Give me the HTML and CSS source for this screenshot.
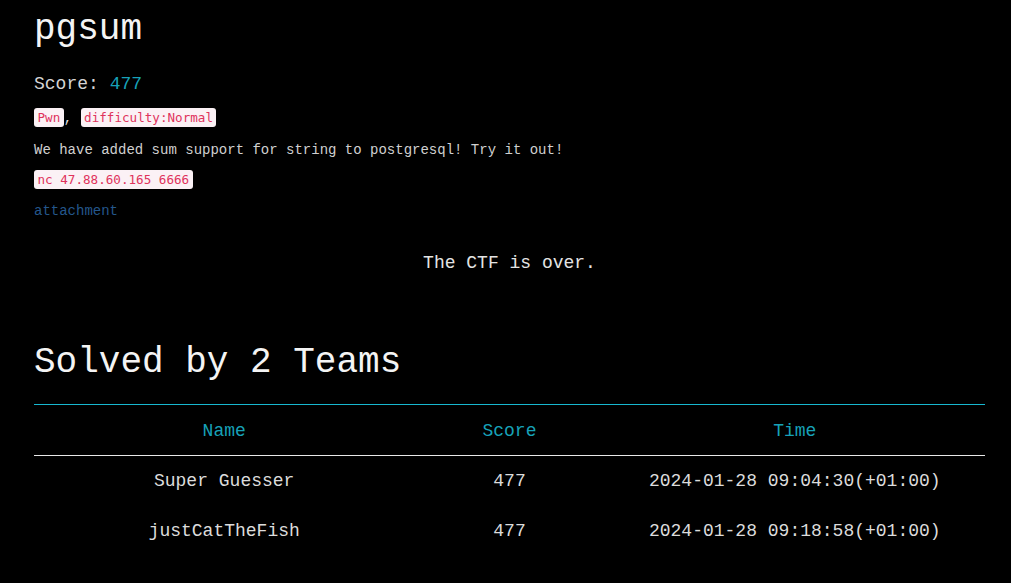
FILE: index.html
```html
<!DOCTYPE html>
<html>
<head>
<meta charset="utf-8">
<link rel="stylesheet" href="styles.css">
</head>
<body>
<div class="page">
  <h1 class="title">pgsum</h1>
  <p class="score">Score: <span class="score-val">477</span></p>
  <p class="tags"><code class="badge">Pwn</code>, <code class="badge">difficulty:Normal</code></p>
  <p class="desc">We have added sum support for string to postgresql! Try it out!</p>
  <p class="conn"><code class="badge">nc 47.88.60.165 6666</code></p>
  <p class="attach"><a href="#" class="link">attachment</a></p>
  <p class="over">The CTF is over.</p>
  <h2 class="solved">Solved by 2 Teams</h2>
  <table class="solves">
    <thead>
      <tr><th class="c-name">Name</th><th class="c-score">Score</th><th class="c-time">Time</th></tr>
    </thead>
    <tbody>
      <tr><td>Super Guesser</td><td>477</td><td>2024-01-28 09:04:30(+01:00)</td></tr>
      <tr><td>justCatTheFish</td><td>477</td><td>2024-01-28 09:18:58(+01:00)</td></tr>
    </tbody>
  </table>
</div>
</body>
</html>
```

FILE: styles.css
```css
html, body {
  margin: 0;
  padding: 0;
  background: #000;
}
body {
  font-family: "Courier New", "Liberation Mono", monospace;
  color: #dcdcdc;
}
.page {
  padding: 8px 26px 0 34px;
}
.title {
  margin: 0;
  font-size: 36px;
  line-height: 43px;
  font-weight: normal;
  color: #f4f4f4;
}
.score {
  margin: 20px 0 0;
  font-size: 18px;
  line-height: 27px;
  color: #d4d4d4;
}
.score-val {
  color: #17a2b8;
}
.tags, .conn {
  margin: 11px 0 0;
  font-size: 14px;
  line-height: 18px;
  color: #ddd;
}
.conn {
  margin-top: 10px;
}
.badge {
  font-family: "DejaVu Sans Mono", monospace;
  font-size: 12.6px;
  color: #e0335c;
  background: #fbf1f5;
  border-radius: 3px;
  padding: 2px 3.5px;
}
.desc {
  margin: 13px 0 0;
  font-size: 14px;
  line-height: 21px;
  color: #d0d0d0;
}
.attach {
  margin: 12px 0 0;
  font-size: 14px;
  line-height: 21px;
}
.link {
  color: #24578c;
  text-decoration: none;
}
.over {
  margin: 28px 0 0;
  text-align: center;
  font-size: 18px;
  line-height: 27px;
  color: #e4e4e4;
}
.solved {
  margin: 64px 0 0;
  font-size: 36px;
  line-height: 43px;
  font-weight: normal;
  color: #f4f4f4;
}
.solves {
  margin-top: 20px;
  width: 100%;
  border-collapse: collapse;
  font-size: 18px;
  border-top: 1px solid #17b8d0;
}
.solves th {
  font-weight: normal;
  color: #17a2b8;
  height: 49px;
  padding: 1px 0 0;
  border-bottom: 1px solid #e8e8e8;
}
.solves td {
  height: 50px;
  text-align: center;
  padding: 0;
  color: #dcdcdc;
}
.c-name { width: 40%; }
.c-score { width: 20%; }
.c-time { width: 40%; }
```
